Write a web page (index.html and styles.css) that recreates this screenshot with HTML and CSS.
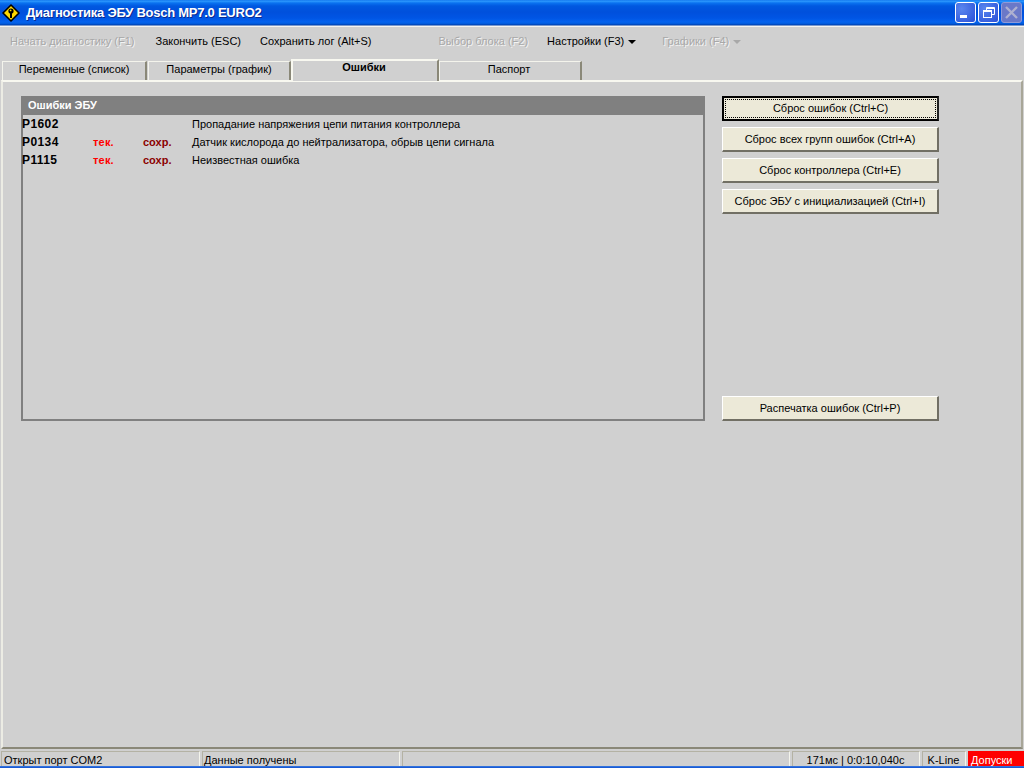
FILE: index.html
```html
<!DOCTYPE html>
<html lang="ru">
<head>
<meta charset="utf-8">
<title>Диагностика ЭБУ Bosch MP7.0 EURO2</title>
<link rel="stylesheet" href="styles.css">
</head>
<body>
<div class="window">
  <header class="titlebar">
    <svg class="app-icon" width="18" height="18" viewBox="0 0 18 18">
      <path d="M9 1 17 9 9 17 1 9Z" fill="#ffd800" stroke="#000" stroke-width="1.6" stroke-linejoin="round"/>
      <circle cx="9" cy="7" r="2.6" fill="#000"/>
      <path d="M8 8h2v6H8z" fill="#000"/>
      <circle cx="8.6" cy="6.4" r=".9" fill="#ffd800"/>
    </svg>
    <span class="title">Диагностика ЭБУ Bosch MP7.0 EURO2</span>
    <div class="caption-buttons">
      <div class="cap-btn">
        <svg width="21" height="21" viewBox="0 0 21 21"><rect x="5" y="13" width="7" height="3" fill="#fff"/></svg>
      </div>
      <div class="cap-btn">
        <svg width="21" height="21" viewBox="0 0 21 21"><g fill="none" stroke="#fff"><rect x="5.5" y="8.5" width="8" height="7"/><path d="M5.5 9.5h8"/><path d="M8.5 8V5.5h8v7H14"/><path d="M8.5 6.5h8"/></g></svg>
      </div>
      <div class="cap-btn cap-disabled">
        <svg width="21" height="21" viewBox="0 0 21 21"><path d="M5 5 16 16M16 5 5 16" stroke="#aeb0d0" stroke-width="2.4" fill="none"/></svg>
      </div>
    </div>
  </header>

  <nav class="menu">
    <span class="menu-item menu-first disabled">Начать диагностику (F1)</span>
    <span class="menu-item">Закончить (ESC)</span>
    <span class="menu-item">Сохранить лог (Alt+S)</span>
    <span class="menu-item disabled menu-group">Выбор блока (F2)</span>
    <span class="menu-item">Настройки (F3)<i class="arrow"></i></span>
    <span class="menu-item disabled menu-far">Графики (F4)<i class="arrow arrow-disabled"></i></span>
  </nav>

  <div class="tabs">
    <div class="tab tab-1">Переменные (список)</div>
    <div class="tab tab-2">Параметры (график)</div>
    <div class="tab tab-active">Ошибки</div>
    <div class="tab tab-4">Паспорт</div>
  </div>

  <main class="panel">
    <section class="errors">
      <h2 class="errors-title">Ошибки ЭБУ</h2>
      <div class="row"><b class="code">P1602</b><b class="cur"></b><b class="saved"></b><span class="desc">Пропадание напряжения цепи питания контроллера</span></div>
      <div class="row"><b class="code">P0134</b><b class="cur">тек.</b><b class="saved">сохр.</b><span class="desc">Датчик кислорода до нейтрализатора, обрыв цепи сигнала</span></div>
      <div class="row"><b class="code">P1115</b><b class="cur">тек.</b><b class="saved">сохр.</b><span class="desc">Неизвестная ошибка</span></div>
    </section>
    <aside class="actions">
      <div class="btn-group">
        <button class="btn btn-default"><span class="focus">Сброс ошибок (Ctrl+C)</span></button>
        <button class="btn">Сброс всех групп ошибок (Ctrl+A)</button>
        <button class="btn">Сброс контроллера (Ctrl+E)</button>
        <button class="btn">Сброс ЭБУ с инициализацией (Ctrl+I)</button>
      </div>
      <button class="btn">Распечатка ошибок (Ctrl+P)</button>
    </aside>
  </main>

  <footer class="status">
    <div class="cell cell-1">Открыт порт COM2</div>
    <div class="cell cell-2">Данные получены</div>
    <div class="cell cell-3"></div>
    <div class="cell cell-4">171мс | 0:0:10,040с</div>
    <div class="cell cell-5">K-Line</div>
    <div class="cell cell-6">Допуски</div>
  </footer>
  <div class="frame-bottom"></div>
</div>
</body>
</html>
```
FILE: styles.css
```css
* { box-sizing: border-box; }
html, body { margin: 0; padding: 0; }
body { background: #d0d0d0; font: 11px "Liberation Sans", Arial, sans-serif; color: #000; }
.window { width: 1024px; height: 768px; display: flex; flex-direction: column; overflow: hidden; background: #d0d0d0; }

.titlebar {
  height: 27px; flex: none; display: flex; align-items: center; padding: 0 2px 2px 2px;
  background: linear-gradient(#0a6be8 0, #2f9cff 1px, #0a72f0 3px, #0058e0 6px, #0050dc 12px, #0055e4 18px, #0463ee 22px, #0058d8 24px, #003ca8 25px, #f4f4f0 26px);
}
.app-icon { flex: none; margin: 0 6px 0 0; }
.title { font: bold 13px "Liberation Sans", Arial, sans-serif; letter-spacing: -0.25px; color: #fff; text-shadow: 1px 1px 0 #0a2a90; white-space: nowrap; }
.caption-buttons { margin-left: auto; display: flex; gap: 2px; }
.cap-btn { width: 21px; height: 21px; border: 1px solid #fff; border-radius: 3px; background: radial-gradient(circle at 30% 30%, #5a86ee, #2a50d8); }
.cap-btn svg { display: block; margin: -1px; }
.cap-disabled { background: #6a78c8; border-color: #8f9ad8; }

.menu { height: 32px; flex: none; display: flex; align-items: center; padding: 0 0 4px 10px; white-space: nowrap; }
.menu-item { margin-right: 19px; }
.menu-first { margin-right: 21px; }
.menu-group { margin-left: 48px; }
.menu-far { margin-left: 7px; }
.disabled { color: #a8a8a8; text-shadow: 1px 1px 0 #f4f4f4; }
.arrow { display: inline-block; margin-left: 4px; vertical-align: 1px; border: 4px solid transparent; border-top-color: #000; border-bottom-width: 0; }
.arrow-disabled { border-top-color: #a8a8a8; }

.tabs { height: 22px; flex: none; display: flex; align-items: flex-end; padding-left: 2px; position: relative; z-index: 1; margin-bottom: -1px; }
.tab {
  height: 19px; text-align: center; padding-top: 1px; margin-bottom: 1px;
  background: #d0d0d0; border-top: 1px solid #f4f4ec; border-left: 1px solid #f4f4ec; border-right: 2px solid #8a8878;
}
.tab-1 { width: 145px; margin-right: 1px; }
.tab-2 { width: 143px; }
.tab-4 { width: 143px; padding-right: 2px; }
.tab-active { width: 148px; height: 22px; margin-bottom: 0; font-weight: bold; padding: 0 2px 0 0; border-top: 2px solid #f8f8f0; border-left: 2px solid #f8f8f0; }

.panel {
  flex: 1; min-height: 0; margin: 0 1px; padding: 14px 0 0 18px; display: flex; align-items: flex-start;
  border-top: 2px solid #f8f8f0; border-left: 2px solid #ececE4; border-right: 2px solid #a8a698; border-bottom: 2px solid #8a8878;
}
.errors { width: 684px; height: 325px; flex: none; border: 2px solid #808080; border-top: 0; }
.errors-title { margin: 0 -2px; height: 19px; padding: 2px 0 0 7px; background: #808080; color: #fff; font: bold 11px/15px "Liberation Sans", Arial, sans-serif; }
.row { height: 18px; display: flex; align-items: center; margin-left: -1px; }
.code { width: 71px; font-size: 12px; letter-spacing: 0.4px; }
.cur { width: 50px; color: #ff0000; letter-spacing: 0.2px; }
.saved { width: 49px; color: #8b0000; }

.actions { margin-left: 17px; width: 217px; height: 325px; display: flex; flex-direction: column; justify-content: space-between; }
.btn-group { display: flex; flex-direction: column; gap: 6px; }
.btn {
  display: block; width: 217px; height: 25px; padding: 0; background: #ece9d8; color: #000; font: 11px "Liberation Sans", Arial, sans-serif;
  border: 2px solid; border-color: #fff #716f64 #716f64 #fff; border-left-width: 1px; border-top-width: 1px; border-radius: 0;
}
.btn-default { border: 2px solid #000; border-right-color: #222; padding: 1px; }
.focus { display: block; height: 19px; line-height: 17px; border: 1px dotted #000; }

.status { height: 15px; flex: none; display: flex; gap: 2px; margin: 2px 0 0 1px; }
.cell { height: 15px; line-height: 17px; padding-left: 2px; border-top: 1px solid #b4b2a4; border-left: 1px solid #b4b2a4; border-right: 1px solid #f4f4ec; white-space: nowrap; overflow: hidden; }
.cell-1 { width: 199px; }
.cell-2 { width: 198px; padding-left: 1px; }
.cell-3 { width: 388px; }
.cell-4 { width: 128px; text-align: center; padding: 0 1px 0 0; }
.cell-5 { width: 44px; text-align: center; padding: 0 1px 0 0; }
.cell-6 { width: 56px; background: #ff0000; color: #fff; border-color: #ff0000; }
.frame-bottom { height: 2px; flex: none; background: linear-gradient(#3c7ce0, #1050d0); }
```
